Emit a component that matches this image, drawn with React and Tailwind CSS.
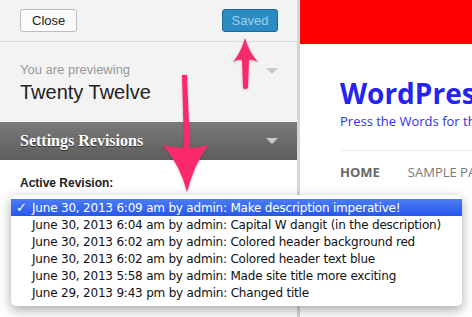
import React from "react";

const revisions = [
  "June 30, 2013 6:09 am by admin: Make description imperative!",
  "June 30, 2013 6:04 am by admin: Capital W dangit (in the description)",
  "June 30, 2013 6:02 am by admin: Colored header background red",
  "June 30, 2013 6:02 am by admin: Colored header text blue",
  "June 30, 2013 5:58 am by admin: Made site title more exciting",
  "June 29, 2013 9:43 pm by admin: Changed title",
];

function Tri({ className }) {
  return (
    <svg width="12" height="7" viewBox="0 0 12 7" className={className}>
      <path d="M0 0 H12 L6 6 Z" fill="currentColor" />
    </svg>
  );
}

export default function App() {
  return (
    <div className="relative w-[472px] h-[317px] overflow-hidden flex bg-white" style={{ fontFamily: '"Liberation Sans", Arial, sans-serif' }}>
      {/* Left customizer panel */}
      <div className="w-[300px] shrink-0 flex flex-col bg-[#f3f3f3] border-r-[3px] border-[#d6d6d6]">
        <div className="h-[42px] shrink-0 flex items-center justify-between pl-[20px] pr-[19px] border-b border-[#dddddd]">
          <div className="h-[23px] px-[11px] flex items-center rounded-[3px] border border-[#bdbdbd] bg-[#fbfbfb] text-[13px] text-[#222]">Close</div>
          <div className="h-[23px] w-[56px] flex items-center justify-center rounded-[3px] border border-[#1f6a94] bg-[#2a8cc2] text-[13px] text-[#9fd0ee]">Saved</div>
        </div>
        <div className="h-[80px] shrink-0 relative pl-[20px] pt-[20px]">
          <div className="text-[13px] leading-[16px] text-[#999]">You are previewing</div>
          <div className="text-[20px] leading-[26px] text-[#222] mt-[1px]">Twenty Twelve</div>
          <Tri className="absolute right-[19px] top-[26px] text-[#c8c8c8]" />
        </div>
        <div className="h-[38px] shrink-0 relative flex items-center pl-[20px] bg-gradient-to-b from-[#7a7a7a] to-[#5e5e5e]">
          <span className="text-[16px] font-bold text-white [text-shadow:0_1px_0_#333]" style={{ fontFamily: '"Liberation Serif", Georgia, serif' }}>Settings Revisions</span>
          <Tri className="absolute right-[19px] top-[16px] text-[#c8c8c8]" />
        </div>
        <div className="flex-1 bg-white pl-[20px] pt-[14px]">
          <div className="text-[12px] font-bold text-[#222]">Active Revision:</div>
        </div>
      </div>

      {/* Right preview */}
      <div className="flex-1 flex flex-col bg-white">
        <div className="h-[44px] shrink-0 bg-[#ff0000]" />
        <div className="pl-[40px]" style={{ fontFamily: '"Open Sans", sans-serif' }}>
          <div className="mt-[33px] text-[28px] leading-[32px] font-bold text-[#2424f0] whitespace-nowrap">WordPress Blog</div>
          <div className="mt-[3px] text-[13px] text-[#3030ee] whitespace-nowrap">Press the Words for the web</div>
          <div className="mt-[18px] border-t border-[#ececec] pt-[12px] flex gap-[28px] text-[13px] whitespace-nowrap">
            <span className="font-bold text-[#666]">HOME</span>
            <span className="text-[#777]">SAMPLE PAGE</span>
          </div>
          <div className="mt-[60px] pl-[50px] text-[26px] text-[#eef0f8] whitespace-nowrap">Blog</div>
        </div>
      </div>

      {/* Pink arrows */}
      <svg className="absolute left-0 top-0 pointer-events-none" width="472" height="317" viewBox="0 0 472 317">
        <defs>
          <filter id="sh" x="-20%" y="-20%" width="140%" height="140%">
            <feDropShadow dx="0" dy="1" stdDeviation="1" floodColor="#000" floodOpacity="0.25" />
          </filter>
        </defs>
        <path
          d="M245 38 Q249 52 258 62 Q252 59 249 60 L248 88 Q245 90 243 88 L242 60 Q238 59 233 62 Q241 52 245 38 Z"
          fill="#fa2b6b"
          filter="url(#sh)"
        />
        <path
          d="M182 75 L187 75 L190 148 Q198 148 208 145 Q194 165 187 192 Q180 165 163 145 Q173 148 184 148 Z"
          fill="#fa2b6b"
          filter="url(#sh)"
        />
      </svg>

      {/* Revision dropdown */}
      <div className="absolute left-[11px] top-[195px] w-[451px] h-[111px] bg-white rounded-[5px] shadow-[0_4px_12px_rgba(0,0,0,0.35)] py-[4px]" style={{ fontFamily: '"DejaVu Sans", sans-serif' }}>
        {revisions.map((r, i) => (
          <div
            key={i}
            className={
              i === 0
                ? "h-[17px] flex items-center bg-gradient-to-b from-[#4b7cf6] to-[#2757ea] text-white text-[12px] whitespace-nowrap"
                : "h-[17px] flex items-center text-[#111] text-[12px] whitespace-nowrap"
            }
          >
            <span className="w-[21px] pl-[5px] shrink-0 text-[13px] font-bold">{i === 0 ? "✓" : ""}</span>
            <span className="tracking-[-0.2px]">{r}</span>
          </div>
        ))}
      </div>
    </div>
  );
}
